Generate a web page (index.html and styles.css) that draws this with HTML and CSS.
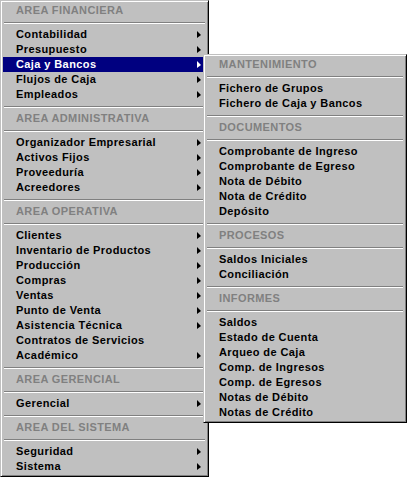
FILE: index.html
```html
<!DOCTYPE html>
<html lang="es">
<head>
    <meta charset="UTF-8">
    <meta name="viewport" content="width=device-width, initial-scale=1.0">
    <title>Menu Principal</title>
    <link rel="stylesheet" href="styles.css">
</head>

<body>
    <div class="menu main-menu">
        <div class="head">AREA FINANCIERA</div>
        <div class="sep"></div>
        <div class="item sub">Contabilidad</div>
        <div class="item sub">Presupuesto</div>
        <div class="item sub active">Caja y Bancos
            <!-- submenu abierto -->
            <div class="menu flyout">
                <div class="head">MANTENIMIENTO</div>
                <div class="sep"></div>
                <div class="item">Fichero de Grupos</div>
                <div class="item">Fichero de Caja y Bancos</div>
                <div class="sep"></div>
                <div class="head">DOCUMENTOS</div>
                <div class="sep"></div>
                <div class="item">Comprobante de Ingreso</div>
                <div class="item">Comprobante de Egreso</div>
                <div class="item">Nota de Débito</div>
                <div class="item">Nota de Crédito</div>
                <div class="item">Depósito</div>
                <div class="sep"></div>
                <div class="head">PROCESOS</div>
                <div class="sep"></div>
                <div class="item">Saldos Iniciales</div>
                <div class="item">Conciliación</div>
                <div class="sep"></div>
                <div class="head">INFORMES</div>
                <div class="sep"></div>
                <div class="item">Saldos</div>
                <div class="item">Estado de Cuenta</div>
                <div class="item">Arqueo de Caja</div>
                <div class="item">Comp. de Ingresos</div>
                <div class="item">Comp. de Egresos</div>
                <div class="item">Notas de Débito</div>
                <div class="item">Notas de Crédito</div>
            </div>
        </div>
        <div class="item sub">Flujos de Caja</div>
        <div class="item sub">Empleados</div>
        <div class="sep"></div>
        <div class="head">AREA ADMINISTRATIVA</div>
        <div class="sep"></div>
        <div class="item sub">Organizador Empresarial</div>
        <div class="item sub">Activos Fijos</div>
        <div class="item sub">Proveeduría</div>
        <div class="item sub">Acreedores</div>
        <div class="sep"></div>
        <div class="head">AREA OPERATIVA</div>
        <div class="sep"></div>
        <div class="item sub">Clientes</div>
        <div class="item sub">Inventario de Productos</div>
        <div class="item sub">Producción</div>
        <div class="item sub">Compras</div>
        <div class="item sub">Ventas</div>
        <div class="item sub">Punto de Venta</div>
        <div class="item sub">Asistencia Técnica</div>
        <div class="item">Contratos de Servicios</div>
        <div class="item sub">Académico</div>
        <div class="sep"></div>
        <div class="head">AREA GERENCIAL</div>
        <div class="sep"></div>
        <div class="item sub">Gerencial</div>
        <div class="sep"></div>
        <div class="head">AREA DEL SISTEMA</div>
        <div class="sep"></div>
        <div class="item sub">Seguridad</div>
        <div class="item sub">Sistema</div>
    </div>
</body>
</html>
```

FILE: styles.css
```css
body {
    margin: 0;
    background-color: #fff;
    font-family: 'Liberation Sans', Arial, sans-serif;
    font-size: 11px;
    font-weight: bold;
    letter-spacing: 0.4px;
    color: #000;
}

.menu {
    box-sizing: border-box;
    background-color: #c0c0c0;
    border: 1px solid;
    border-color: #c0c0c0 #000 #000 #c0c0c0;
    box-shadow: inset 1px 1px #fff, inset -1px -1px #808080;
    padding: 2px;
}

.main-menu {
    width: 209px;
    height: 477px;
}

.flyout {
    position: absolute;
    left: 200px;
    top: -3px;
    width: 204px;
    height: 369px;
    color: #000;
}

.item,
.head {
    height: 15px;
    line-height: 15px;
    padding-left: 13px;
    white-space: nowrap;
}

.head {
    color: #808080;
}

.item {
    position: relative;
}

.sub::after {
    content: "";
    position: absolute;
    right: 5px;
    top: 4px;
    width: 0;
    height: 0;
    border-left: 4px solid #000;
    border-top: 4px solid transparent;
    border-bottom: 3px solid transparent;
}

.active {
    background-color: #000080;
    color: #fff;
}

.active::after {
    border-left-color: #fff;
}

.sep {
    height: 0;
    margin: 4px 1px 3px 1px;
    border-top: 1px solid #808080;
    border-bottom: 1px solid #fff;
}
```
